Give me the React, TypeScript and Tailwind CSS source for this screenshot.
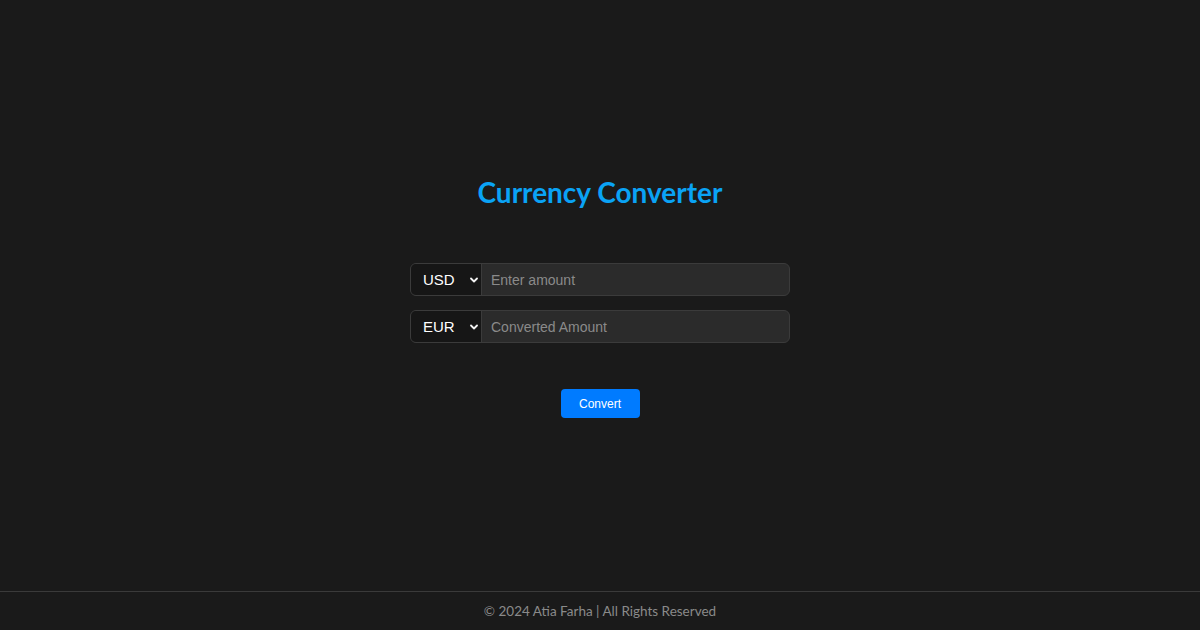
import { useState } from "react";

function Chevron() {
  return (
    <svg
      className="pointer-events-none absolute right-[3px] top-1/2 -translate-y-1/2"
      width="8"
      height="6"
      viewBox="0 0 8 6"
      fill="none"
    >
      <path d="M1 1.5l3 3 3-3" stroke="#f2f2f2" strokeWidth="1.8" strokeLinecap="round" strokeLinejoin="round" />
    </svg>
  );
}

function Row({ code, placeholder }: { code: string; placeholder: string }) {
  return (
    <div className="flex h-[33px] w-[380px] rounded-[6px] border border-[#3b3b3b] bg-[#2b2b2b] overflow-hidden">
      <div className="relative w-[71px] shrink-0 border-r border-[#3b3b3b] bg-[#161616]">
        <select
          defaultValue={code}
          className="h-full w-full appearance-none bg-transparent pl-[12px] pt-[1px] text-[15px] text-white outline-none"
        >
          <option>{code}</option>
        </select>
        <Chevron />
      </div>
      <input
        placeholder={placeholder}
        className="min-w-0 flex-1 bg-transparent px-[9px] pt-[1px] text-[14px] text-white placeholder:text-[#8a8a8a] outline-none"
      />
    </div>
  );
}

export default function App() {
  const [, setTick] = useState(0);
  return (
    <div className="flex h-[630px] w-full flex-col bg-[#1a1a1a] font-['Liberation_Sans',Arial,sans-serif]">
      <main className="flex flex-1 flex-col items-center justify-center pt-[4px]">
        <h1 className="font-['Lato',sans-serif] text-[28px] font-bold leading-[30px] text-[#0aa3f5]">
          Currency Converter
        </h1>
        <div className="mt-[56px] flex flex-col gap-[14px]">
          <Row code="USD" placeholder="Enter amount" />
          <Row code="EUR" placeholder="Converted Amount" />
        </div>
        <button
          onClick={() => setTick((t) => t + 1)}
          className="mt-[46px] h-[29px] w-[79px] rounded-[4px] bg-[#007bff] text-[12px] text-white"
        >
          Convert
        </button>
      </main>
      <footer className="flex h-[39px] items-center justify-center border-t border-[#3a3a3a] font-['Lato',sans-serif] text-[13.5px] text-[#8a8a8a]">
        © 2024 Atia Farha | All Rights Reserved
      </footer>
    </div>
  );
}
